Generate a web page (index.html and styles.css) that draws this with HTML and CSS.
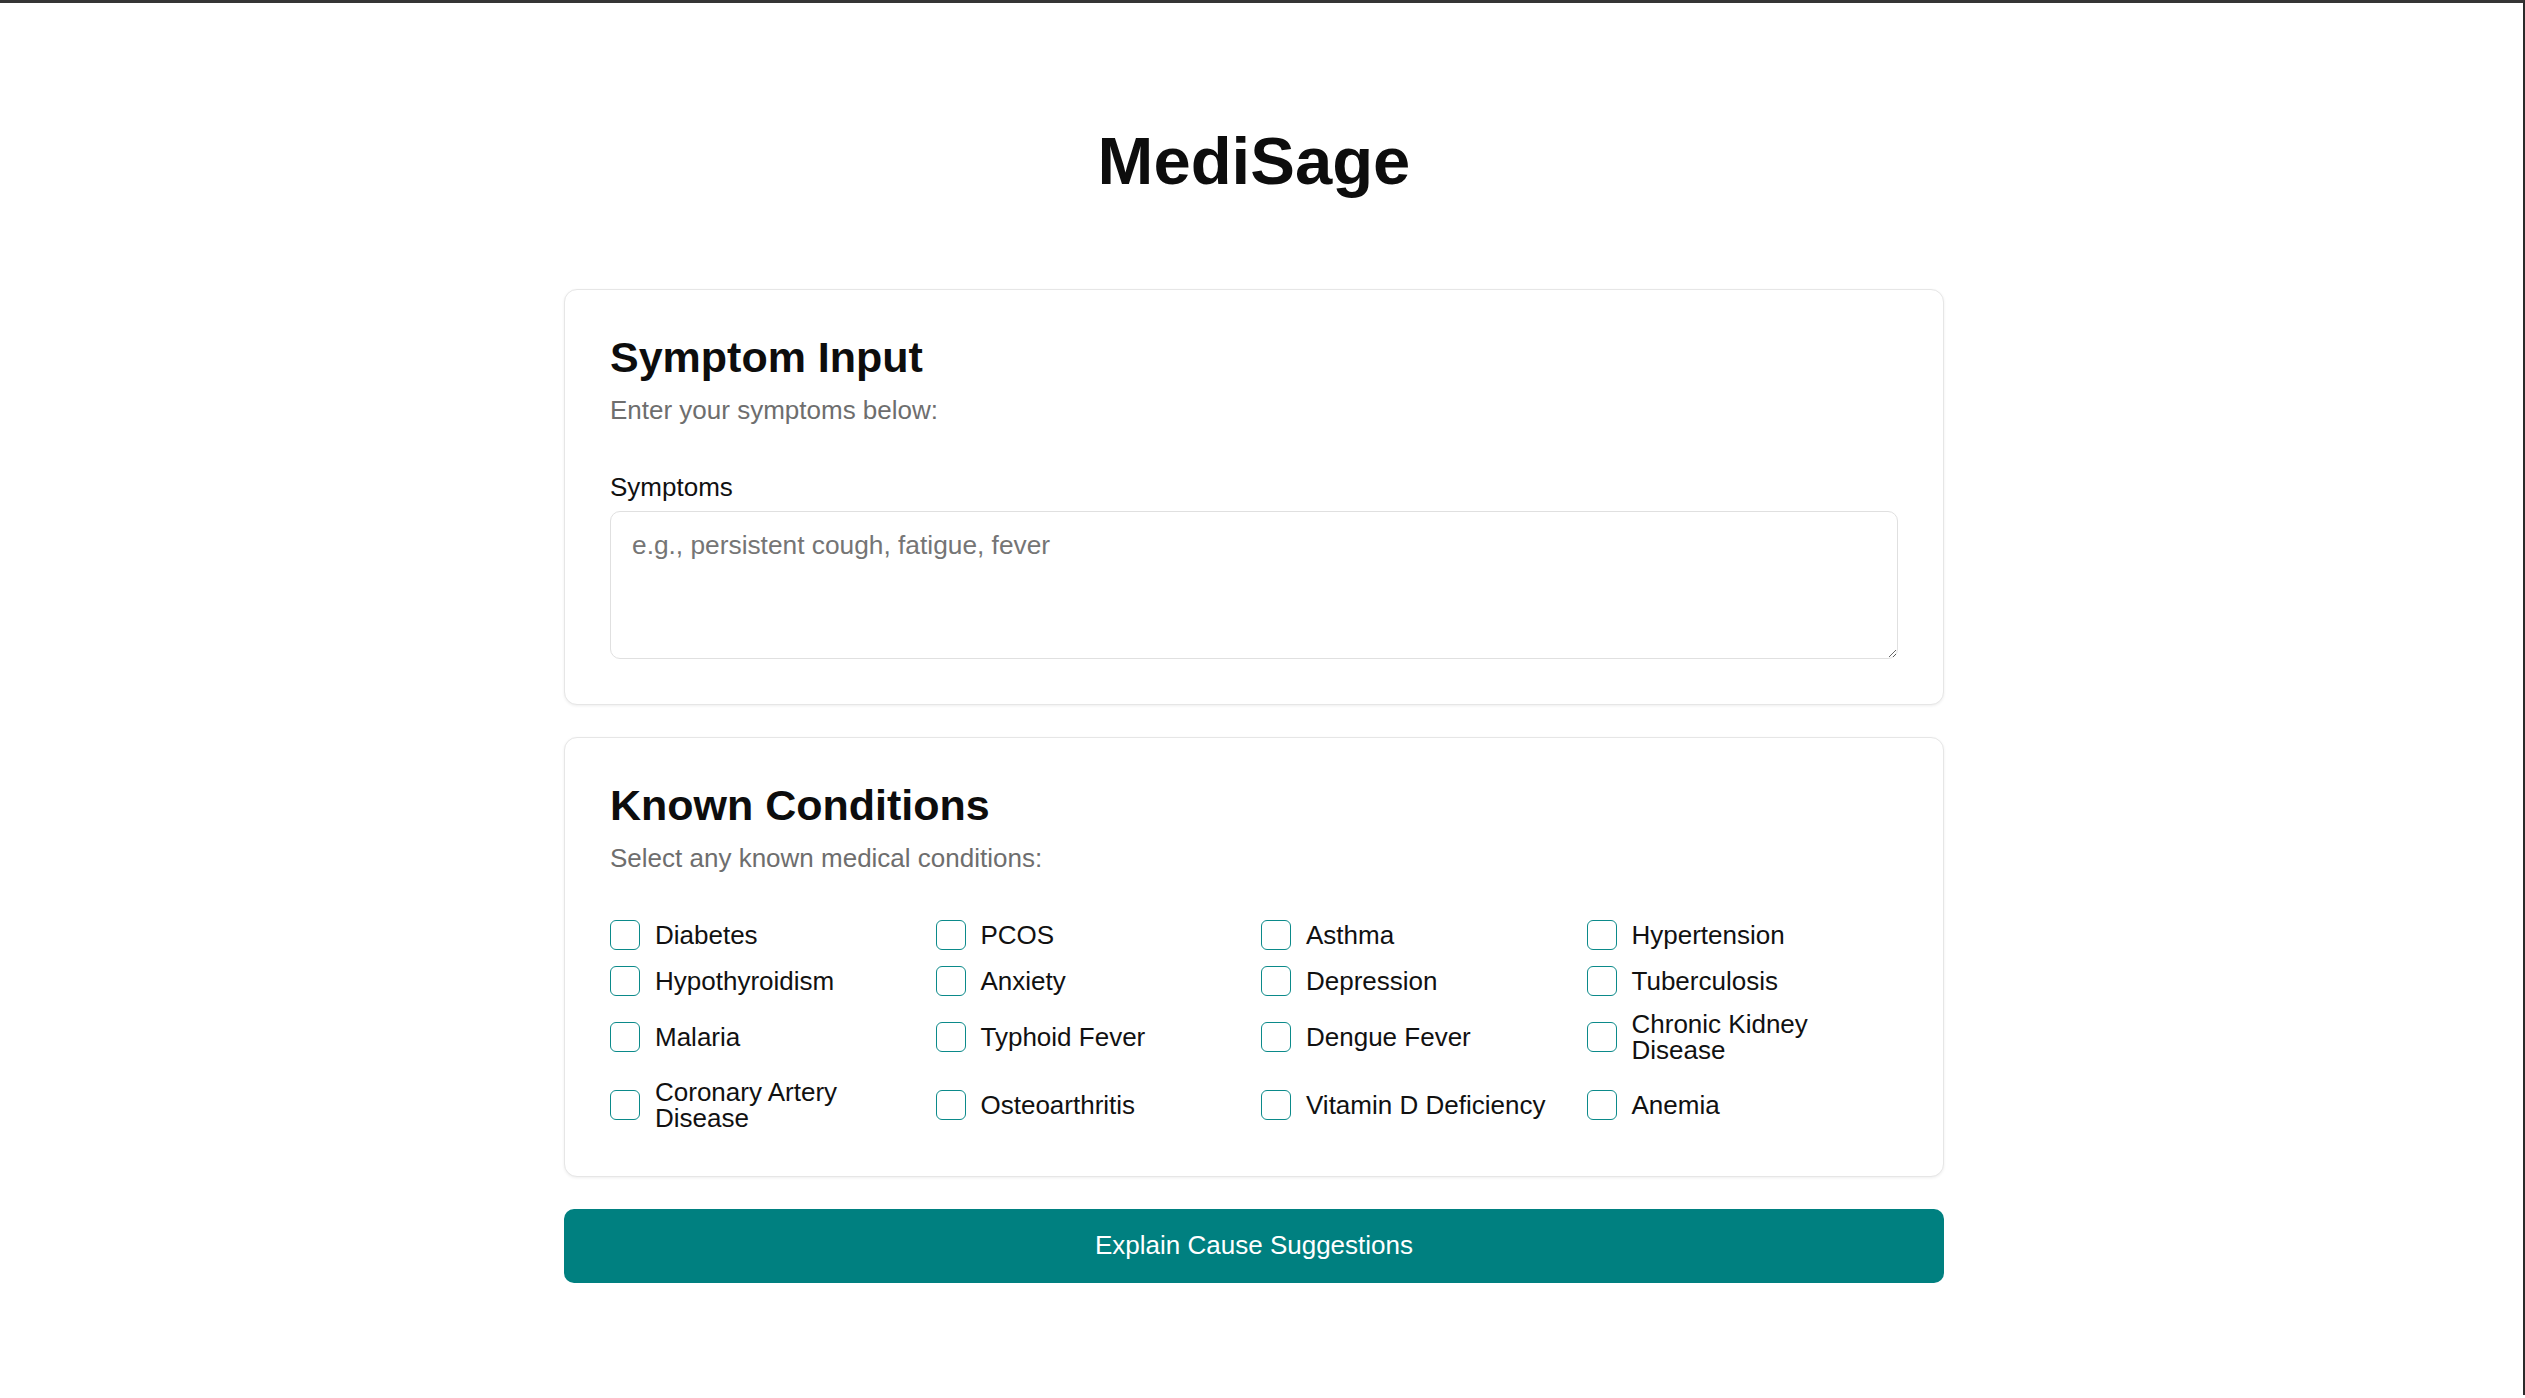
FILE: index.html
```html
<!DOCTYPE html>
<html lang="en">
<head>
<meta charset="utf-8">
<title>MediSage</title>
<link rel="stylesheet" href="styles.css">
</head>
<body>
<main class="page">
  <h1 class="title">MediSage</h1>
  <section class="card">
    <h2 class="card-title">Symptom Input</h2>
    <p class="card-sub">Enter your symptoms below:</p>
    <label class="field-label" for="symptoms">Symptoms</label>
    <textarea id="symptoms" class="symptoms" placeholder="e.g., persistent cough, fatigue, fever"></textarea>
  </section>
  <section class="card">
    <h2 class="card-title">Known Conditions</h2>
    <p class="card-sub">Select any known medical conditions:</p>
    <div class="conditions">
      <label class="cond"><input type="checkbox" class="cb"><span>Diabetes</span></label>
      <label class="cond"><input type="checkbox" class="cb"><span>PCOS</span></label>
      <label class="cond"><input type="checkbox" class="cb"><span>Asthma</span></label>
      <label class="cond"><input type="checkbox" class="cb"><span>Hypertension</span></label>
      <label class="cond"><input type="checkbox" class="cb"><span>Hypothyroidism</span></label>
      <label class="cond"><input type="checkbox" class="cb"><span>Anxiety</span></label>
      <label class="cond"><input type="checkbox" class="cb"><span>Depression</span></label>
      <label class="cond"><input type="checkbox" class="cb"><span>Tuberculosis</span></label>
      <label class="cond"><input type="checkbox" class="cb"><span>Malaria</span></label>
      <label class="cond"><input type="checkbox" class="cb"><span>Typhoid Fever</span></label>
      <label class="cond"><input type="checkbox" class="cb"><span>Dengue Fever</span></label>
      <label class="cond"><input type="checkbox" class="cb"><span>Chronic Kidney Disease</span></label>
      <label class="cond"><input type="checkbox" class="cb"><span>Coronary Artery Disease</span></label>
      <label class="cond"><input type="checkbox" class="cb"><span>Osteoarthritis</span></label>
      <label class="cond"><input type="checkbox" class="cb"><span>Vitamin D Deficiency</span></label>
      <label class="cond"><input type="checkbox" class="cb"><span>Anemia</span></label>
    </div>
  </section>
  <button class="submit" type="button">Explain Cause Suggestions</button>
</main>
</body>
</html>
```
FILE: styles.css
```css
html, body {
  margin: 0;
  padding: 0;
}
body {
  background: #ffffff;
  border-top: 3px solid #353535;
  border-right: 2px solid #2b2b2b;
  padding-right: 15px;
  min-height: 1395px;
  box-sizing: border-box;
  font-family: "Liberation Sans", Arial, sans-serif;
  color: #111111;
}
.page {
  width: 1380px;
  margin: 0 auto;
  padding-top: 118px;
  display: flex;
  flex-direction: column;
  gap: 32px;
}
.title {
  margin: 0 0 56px;
  font-size: 67px;
  line-height: 80px;
  font-weight: 700;
  text-align: center;
  color: #0d0d0d;
}
.card {
  border: 1px solid #e6e6e6;
  border-radius: 13px;
  box-shadow: 0 1px 3px rgba(0, 0, 0, 0.07);
  padding: 45px;
  background: #fff;
  display: flex;
  flex-direction: column;
}
.card-title {
  margin: 0;
  font-size: 43px;
  line-height: 45px;
  font-weight: 700;
  color: #0d0d0d;
}
.card-sub {
  margin: 17px 0 0;
  font-size: 26px;
  line-height: 26px;
  color: #6e6e6e;
}
.field-label {
  margin-top: 51px;
  font-size: 26px;
  line-height: 26px;
  color: #111;
}
.symptoms {
  margin-top: 11px;
  width: 100%;
  height: 148px;
  box-sizing: border-box;
  border: 1px solid #e0e0e0;
  border-radius: 10px;
  padding: 18px 21px;
  font-family: "Liberation Sans", Arial, sans-serif;
  font-size: 26.3px;
  line-height: 30px;
  color: #111;
  resize: vertical;
  outline: none;
}
.symptoms::placeholder {
  color: #757575;
}
.conditions {
  margin-top: 49px;
  display: grid;
  grid-template-columns: repeat(4, 1fr);
  column-gap: 14px;
  row-gap: 15.5px;
}
.cond {
  display: flex;
  align-items: center;
  gap: 15px;
  font-size: 26px;
  line-height: 26px;
  color: #111;
}
.cb {
  appearance: none;
  -webkit-appearance: none;
  margin: 0;
  flex: 0 0 auto;
  width: 30px;
  height: 30px;
  box-sizing: border-box;
  border: 1.5px solid #0b8a8a;
  border-radius: 6px;
  background: #fff;
}
.submit {
  height: 74px;
  width: 100%;
  border: none;
  border-radius: 10px;
  background: #008080;
  color: #ffffff;
  font-family: "Liberation Sans", Arial, sans-serif;
  font-size: 26px;
  cursor: pointer;
}
```
